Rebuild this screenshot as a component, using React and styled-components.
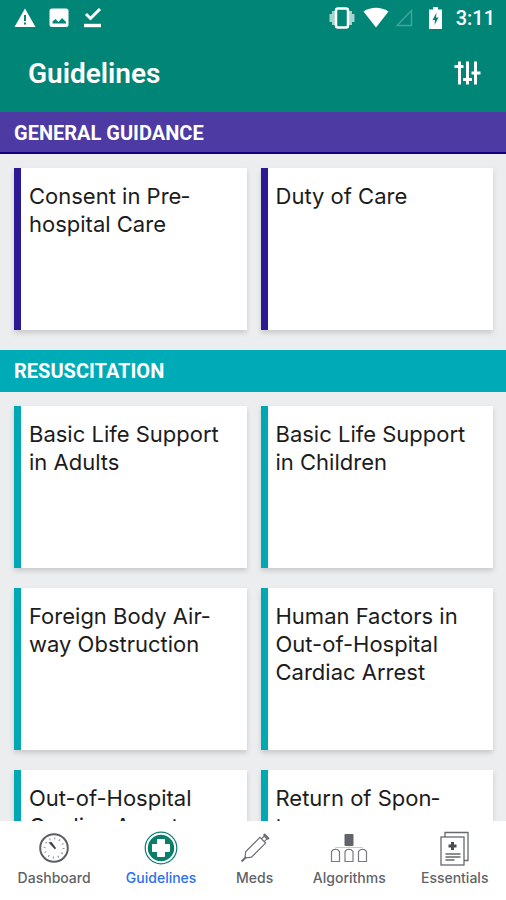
import styled, { createGlobalStyle } from "styled-components";

const sections = [
  {
    title: "General guidance",
    color: "#4d3aa3",
    stripe: "#2b1a94",
    edge: "#16007f",
    items: ["Consent in Pre\u00adhospital Care", "Duty of Care"],
  },
  {
    title: "Resuscitation",
    color: "#00abb8",
    stripe: "#00a8b3",
    edge: "#00abb8",
    items: [
      "Basic Life Support in Adults",
      "Basic Life Support in Children",
      "Foreign Body Air\u00adway Obstruction",
      "Human Factors in Out-of-Hospital Cardiac Arrest",
      "Out-of-Hospital Cardiac Arrest",
      "Return of Spon\u00adtaneous",
    ],
  },
];

const tabs = [
  { label: "Dashboard", Icon: DashboardIcon },
  { label: "Guidelines", Icon: GuidelinesIcon, active: true },
  { label: "Meds", Icon: SyringeIcon },
  { label: "Algorithms", Icon: AlgorithmsIcon },
  { label: "Essentials", Icon: EssentialsIcon },
];

export default function App() {
  return (
    <>
      <GlobalStyle />
      <Screen>
        <Header>
          <StatusBar>
            <StatusGroup $gap={12}>
              <WarningIcon />
              <PhotoIcon />
              <DoneIcon />
            </StatusGroup>
            <StatusGroup $gap={6}>
              <VibrateIcon />
              <WifiIcon />
              <SignalIcon />
              <BatteryIcon />
              <Clock>3:11</Clock>
            </StatusGroup>
          </StatusBar>
          <TitleBar>
            <Title>Guidelines</Title>
            <FilterButton type="button" aria-label="Filter">
              <FilterIcon />
            </FilterButton>
          </TitleBar>
        </Header>
        <Content>
          {sections.map((section) => (
            <section key={section.title}>
              <SectionTitle $color={section.color} $edge={section.edge}>
                {section.title}
              </SectionTitle>
              <CardGrid>
                {section.items.map((item) => (
                  <Card key={item} href="#" $stripe={section.stripe}>
                    {item}
                  </Card>
                ))}
              </CardGrid>
            </section>
          ))}
        </Content>
        <TabBar>
          {tabs.map(({ label, Icon, active }) => (
            <Tab key={label} href="#" $active={active}>
              <Icon />
              {label}
            </Tab>
          ))}
        </TabBar>
      </Screen>
    </>
  );
}

function WarningIcon() {
  return (
    <svg width="22" height="20" viewBox="0 0 22 20">
      <path d="M11 0.5 L21.5 19 H0.5 Z" fill="#fff" />
      <path d="M10 7h2v6h-2zM10 14.5h2v2h-2z" fill="#008577" />
    </svg>
  );
}

function PhotoIcon() {
  return (
    <svg width="22" height="20" viewBox="0 0 22 20">
      <rect x="1.5" y="0.5" width="19" height="18.5" rx="2.5" fill="#fff" />
      <path d="M4.500 15.500v-2l3-2.500 3 3 3.500-4 4 4v1.500z" fill="#008577" />
    </svg>
  );
}

function DoneIcon() {
  return (
    <svg width="22" height="20" viewBox="0 0 22 20">
      <path
        d="M4 6l4.500 4.500L18 1"
        fill="none"
        stroke="#fff"
        strokeWidth="3"
      />
      <path d="M2 15.800h17v3.400H2z" fill="#fff" />
    </svg>
  );
}

function VibrateIcon() {
  return (
    <svg width="28" height="22" viewBox="0 0 28 22">
      <path
        d="M3 4h3v14H3zM0.500 7H3v8H0.500zM20 4h3v14h-3zM23 7h2.500v8H23z"
        fill="#a6d3cd"
      />
      <rect
        x="7"
        y="1.500"
        width="12"
        height="19"
        rx="2"
        fill="none"
        stroke="#fff"
        strokeWidth="2.500"
      />
    </svg>
  );
}

function WifiIcon() {
  return (
    <svg width="26" height="22" viewBox="0 0 26 22">
      <path d="M0.500 4.500C8 -0.500 18 -0.500 25.500 4.500L13 20.500z" fill="#fff" />
    </svg>
  );
}

function SignalIcon() {
  return (
    <svg width="21" height="22" viewBox="0 0 21 22">
      <path
        d="M16.500 3.500v15H2z"
        fill="none"
        stroke="#4aa398"
        strokeWidth="1.400"
      />
    </svg>
  );
}

function BatteryIcon() {
  return (
    <svg width="28" height="22" viewBox="1 0 28 22">
      <path d="M12 0h5v2.500h4V22H8V2.500h4z" fill="#fff" />
      <path d="M15.500 5.500l-4 7.500h2.500l-0.500 5 4-7.500h-2.500z" fill="#008577" />
    </svg>
  );
}

function FilterIcon() {
  return (
    <svg width="28" height="24" viewBox="0 0 28 24">
      <path
        d="M5.500 0.500v23M13.500 0.500v23M21.500 0.500v23"
        stroke="#fff"
        strokeWidth="3"
      />
      <path
        d="M0.500 5.500h9M9 18.500h9M17.500 12h9"
        stroke="#fff"
        strokeWidth="3"
      />
    </svg>
  );
}

function DashboardIcon() {
  return (
    <svg width="36" height="36" viewBox="0 0 36 36">
      <circle
        cx="18"
        cy="18"
        r="13.800"
        fill="none"
        stroke="#5c6063"
        strokeWidth="2"
      />
      <circle
        cx="18"
        cy="18"
        r="9.500"
        fill="none"
        stroke="#85898c"
        strokeWidth="2"
        strokeDasharray="1 3.974"
      />
      <path d="M12.500 12.500l3-0.500 4.500 6-1 1.500z" fill="#3c4043" />
    </svg>
  );
}

function GuidelinesIcon() {
  return (
    <svg width="36" height="36" viewBox="0 0 36 36">
      <circle
        cx="18"
        cy="18"
        r="15.800"
        fill="none"
        stroke="#0b7d6a"
        strokeWidth="1.200"
      />
      <circle cx="18" cy="18" r="13.200" fill="#0b7d6a" />
      <path
        d="M14.500 9.500h7v5h5v7h-5v5h-7v-5h-5v-7h5z"
        fill="#fff"
        stroke="#fff"
        strokeLinejoin="round"
      />
    </svg>
  );
}

function SyringeIcon() {
  return (
    <svg width="36" height="36" viewBox="0 0 36 36">
      <g
        transform="rotate(-45 18 18)"
        fill="none"
        stroke="#6a6e71"
        strokeWidth="1.200"
      >
        <path d="M-1 18h6" strokeWidth="2" />
        <path d="M5 17l4-3h20v8H9l-4-3z" />
        <path d="M29 16h4v4h-4" />
        <path d="M34 14.500v7" strokeWidth="2.500" />
      </g>
    </svg>
  );
}

function AlgorithmsIcon() {
  return (
    <svg width="40" height="36" viewBox="0 0 40 36">
      <path d="M20 15v5M6.500 20v-2.500h27V20" fill="none" stroke="#c8cbcd" />
      <rect x="15.500" y="4" width="9" height="12" rx="1" fill="#60646a" />
      <g fill="none" stroke="#777b7e" strokeWidth="1.200">
        <path d="M4.500 19.500h4l2 2v10h-8v-10z" />
        <path d="M18 19.500h4l2 2v10h-8v-10z" />
        <path d="M31.500 19.500h4l2 2v10h-8v-10z" />
      </g>
    </svg>
  );
}

function EssentialsIcon() {
  return (
    <svg width="36" height="36" viewBox="0 0 36 36">
      <g fill="none" stroke="#666a6d" strokeWidth="1.300">
        <path d="M8 7V2.500h23v28h-4" />
        <rect x="4" y="7" width="23" height="28" />
        <path d="M8.500 24h15M8.500 27h15M8.500 30h9" />
      </g>
      <path
        d="M14 12h3v2.500h2.500v3H17V20h-3v-2.500h-2.500v-3H14z"
        fill="#4a4e52"
      />
    </svg>
  );
}

const GlobalStyle = createGlobalStyle`
  * {
    box-sizing: border-box;
  }

  body {
    margin: 0;
    background: #ebedee;
    font-family: Inter, "Liberation Sans", sans-serif;
  }

  svg {
    display: block;
    flex: none;
  }
`;

const Screen = styled.div`
  display: flex;
  flex-direction: column;
  height: 100vh;
`;

const Header = styled.header`
  flex: none;
  background: #008577;
  color: #fff;
  font-family: Roboto, sans-serif;
`;

const StatusBar = styled.div`
  display: flex;
  justify-content: space-between;
  align-items: center;
  height: 36px;
  padding: 0 11px 0 14px;
`;

const StatusGroup = styled.div`
  display: flex;
  align-items: center;
  gap: ${({ $gap }) => $gap}px;
`;

const Clock = styled.time`
  font-size: 20px;
  font-weight: 500;
`;

const TitleBar = styled.div`
  display: flex;
  justify-content: space-between;
  align-items: center;
  height: 76px;
  padding: 0 24px 2px 28px;
`;

const Title = styled.h1`
  margin: 0;
  font-size: 28px;
  font-weight: 600;
`;

const FilterButton = styled.button`
  padding: 0;
  border: none;
  background: none;
  cursor: pointer;
`;

const Content = styled.main`
  flex: 1;
  min-height: 0;
  overflow: hidden;
`;

const SectionTitle = styled.h2`
  margin: 0;
  padding: 0 14px;
  background: ${({ $color }) => $color};
  box-shadow: inset 0 -2px ${({ $edge }) => $edge};
  color: #fff;
  font-family: Roboto, sans-serif;
  font-size: 20px;
  font-weight: 700;
  line-height: 42px;
  text-transform: uppercase;
`;

const CardGrid = styled.div`
  display: grid;
  grid-template-columns: 1fr 1fr;
  gap: 20px 14px;
  padding: 14px 13px 20px 14px;
`;

const Card = styled.a`
  height: 162px;
  padding: 14px 8px;
  border-left: 7px solid ${({ $stripe }) => $stripe};
  background: #fff;
  box-shadow: 0 3px 5px #00000026;
  color: #1c1c1c;
  font-size: 22px;
  line-height: 28px;
  text-decoration: none;
`;

const TabBar = styled.nav`
  display: flex;
  flex: none;
  height: 79px;
  padding-top: 9px;
  background: #fff;
`;

const Tab = styled.a`
  display: flex;
  flex: 1 0 auto;
  flex-direction: column;
  align-items: center;
  gap: 4px;
  color: ${({ $active }) => ($active ? "#2a6ff0" : "#5f6368")};
  font-size: 14px;
  font-weight: 500;
  line-height: 16px;
  text-decoration: none;

  svg {
    width: 46px;
  }
`;
